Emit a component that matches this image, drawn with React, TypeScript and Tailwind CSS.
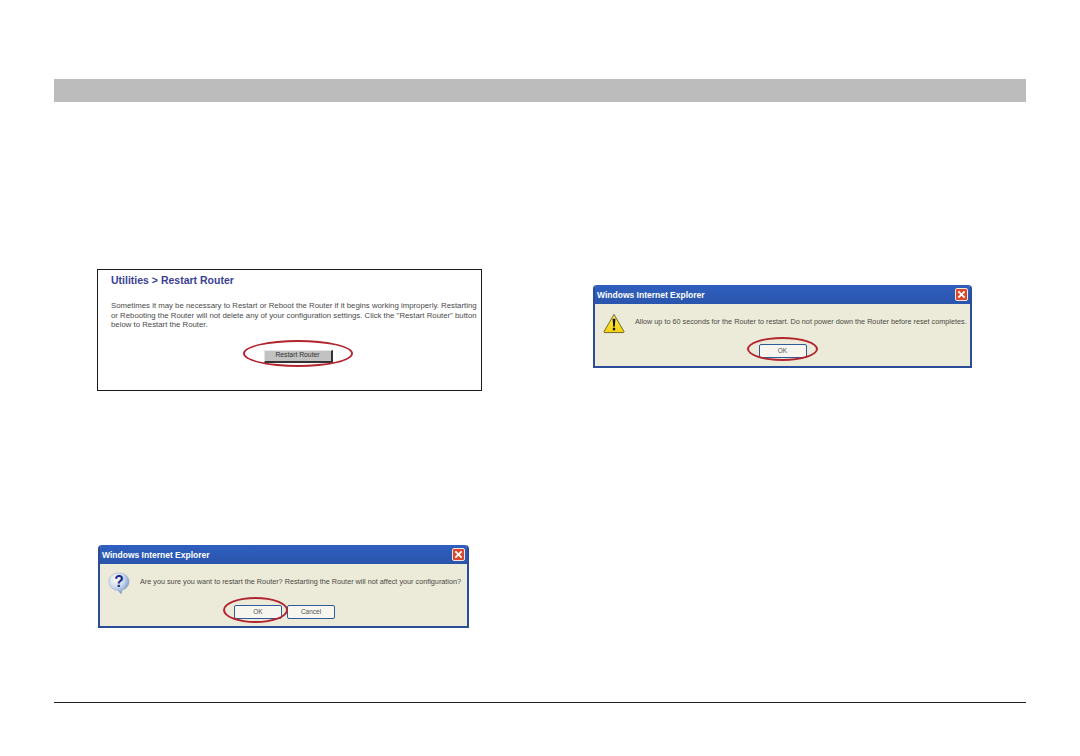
import type { ReactNode } from 'react';

const font = { fontFamily: '"Liberation Sans", Arial, sans-serif' };

function CloseButton() {
  return (
    <div className="flex h-[13px] w-[13px] items-center justify-center rounded-[2px] border border-[#f3e4dc] bg-[#d8492e]">
      <svg width="9" height="9" viewBox="0 0 10 10">
        <path d="M1.5 1.5 L8.5 8.5 M8.5 1.5 L1.5 8.5" stroke="#ffffff" strokeWidth="2" />
      </svg>
    </div>
  );
}

function QuestionIcon() {
  return (
    <svg width="22" height="23" viewBox="0 0 24 25">
      <defs>
        <radialGradient id="qfill" cx="35%" cy="30%" r="75%">
          <stop offset="0%" stopColor="#ffffff" />
          <stop offset="55%" stopColor="#c9d8ec" />
          <stop offset="100%" stopColor="#6d8dbd" />
        </radialGradient>
      </defs>
      <path d="M12 1 C18.5 1 23 5 23 10.5 C23 15.5 19 19 15.5 19.5 L14.5 24 L10.5 20 C5 19.5 1 15.5 1 10.5 C1 5 5.5 1 12 1 Z" fill="url(#qfill)" stroke="#9db2d2" strokeWidth="0.6" />
      <text x="12" y="16.5" textAnchor="middle" fontSize="17" fontWeight="700" fill="#1b2a86" style={font}>?</text>
    </svg>
  );
}

function WarningIcon() {
  return (
    <svg width="22" height="21" viewBox="0 0 23 21">
      <defs>
        <linearGradient id="wfill" x1="0" y1="0" x2="0" y2="1">
          <stop offset="0%" stopColor="#fff04a" />
          <stop offset="100%" stopColor="#f6cf10" />
        </linearGradient>
      </defs>
      <path d="M11.5 1 L22 19 Q22 20 21 20 L2 20 Q1 20 1 19 Z" fill="url(#wfill)" stroke="#5f5426" strokeWidth="0.9" strokeLinejoin="round" />
      <path d="M10 5.5 L13 5.5 L12.3 14 L10.7 14 Z" fill="#111111" />
      <rect x="10.3" y="15" width="2.4" height="2.6" fill="#111111" />
    </svg>
  );
}

function XpButton({ children }: { children: ReactNode }) {
  return (
    <div className="flex h-[14px] w-[48px] items-center justify-center rounded-[2px] border border-[#2f5a9e] bg-[#f6f5ee] text-[6.5px] text-[#555555]">
      {children}
    </div>
  );
}

function Dialog({ size, iconClass, rowClass, icon, message, children }: { size: string; iconClass: string; rowClass: string; icon: ReactNode; message: string; children: ReactNode }) {
  return (
    <div className={`${size} overflow-hidden rounded-t-[4px] border-x-2 border-b-2 border-[#2b4c96] bg-[#ecead9]`}>
      <div className="flex h-[19px] items-center justify-between bg-gradient-to-b from-[#2f5fbf] to-[#2a55ad] pr-[2px] pl-[2px]">
        <span className="pt-[1px] text-[8.5px] font-bold text-white">Windows Internet Explorer</span>
        <CloseButton />
      </div>
      <div className={`flex ${rowClass}`}>
        <div className={`w-[40px] pl-[8px] ${iconClass}`}>{icon}</div>
        <div className="mt-[13px] text-[7.26px] leading-[10px] whitespace-nowrap text-[#4a4a44]">{message}</div>
      </div>
      <div className="flex justify-center">{children}</div>
    </div>
  );
}

export default function App() {
  return (
    <div className="h-[756px] bg-white px-[54px] pt-[79px]" style={font}>
      <div className="h-[23px] bg-[#bcbcbc]" />

      <div className="grid h-[600px] grid-cols-[539px_1fr]">
        <div className="pl-[43px]">
          <div className="mt-[167px] h-[122px] w-[385px] border border-[#1a1a1a] bg-white pt-[3px] pl-[13px]">
            <div className="text-[10.5px] leading-[14px] font-bold text-[#3a3f94]">Utilities &gt; Restart Router</div>
            <p className="mt-[14px] text-[7.8px] leading-[9.5px] whitespace-nowrap text-[#4a4a4a]">
              Sometimes it may be necessary to Restart or Reboot the Router if it begins working improperly. Restarting
              <br />
              or Rebooting the Router will not delete any of your configuration settings. Click the "Restart Router" button
              <br />
              below to Restart the Router.
            </p>
            <div className="mt-[20px] ml-[4px] flex justify-center">
              <div className="relative">
                <div className="flex h-[13px] w-[69px] items-center justify-center border-t border-l border-r-2 border-b-2 border-t-[#e4e4e4] border-r-[#333333] border-b-[#333333] border-l-[#e4e4e4] bg-[#c2c2c2] text-[6.8px] text-[#333333]">
                  Restart Router
                </div>
                <div className="absolute top-[-10px] left-[-21px] h-[27px] w-[110px] rounded-[50%] border-2 border-[#b3252e]" />
              </div>
            </div>
          </div>

          <div className="mt-[154px] ml-[1px]">
            <Dialog
              size="h-[83px] w-[371px]"
              iconClass="pt-[8px]"
              rowClass="h-[41px]"
              icon={<QuestionIcon />}
              message="Are you sure you want to restart the Router? Restarting the Router will not affect your configuration?"
            >
              <div className="ml-[2px] flex gap-[5px]">
                <div className="relative">
                  <XpButton>OK</XpButton>
                  <div className="absolute top-[-8px] left-[-11px] h-[26px] w-[65px] rounded-[50%] border-2 border-[#b3252e]" />
                </div>
                <XpButton>Cancel</XpButton>
              </div>
            </Dialog>
          </div>
        </div>

        <div className="pt-[183px]">
          <Dialog
            size="h-[83px] w-[379px]"
            iconClass="pt-[9px]"
            rowClass="h-[40px]"
            icon={<WarningIcon />}
            message="Allow up to 60 seconds for the Router to restart. Do not power down the Router before reset completes."
          >
            <div className="relative">
              <XpButton>OK</XpButton>
              <div className="absolute top-[-7px] left-[-12px] h-[24px] w-[71px] rounded-[50%] border-2 border-[#b3252e]" />
            </div>
          </Dialog>
        </div>
      </div>

      <div className="border-t border-[#222222]" />
    </div>
  );
}
